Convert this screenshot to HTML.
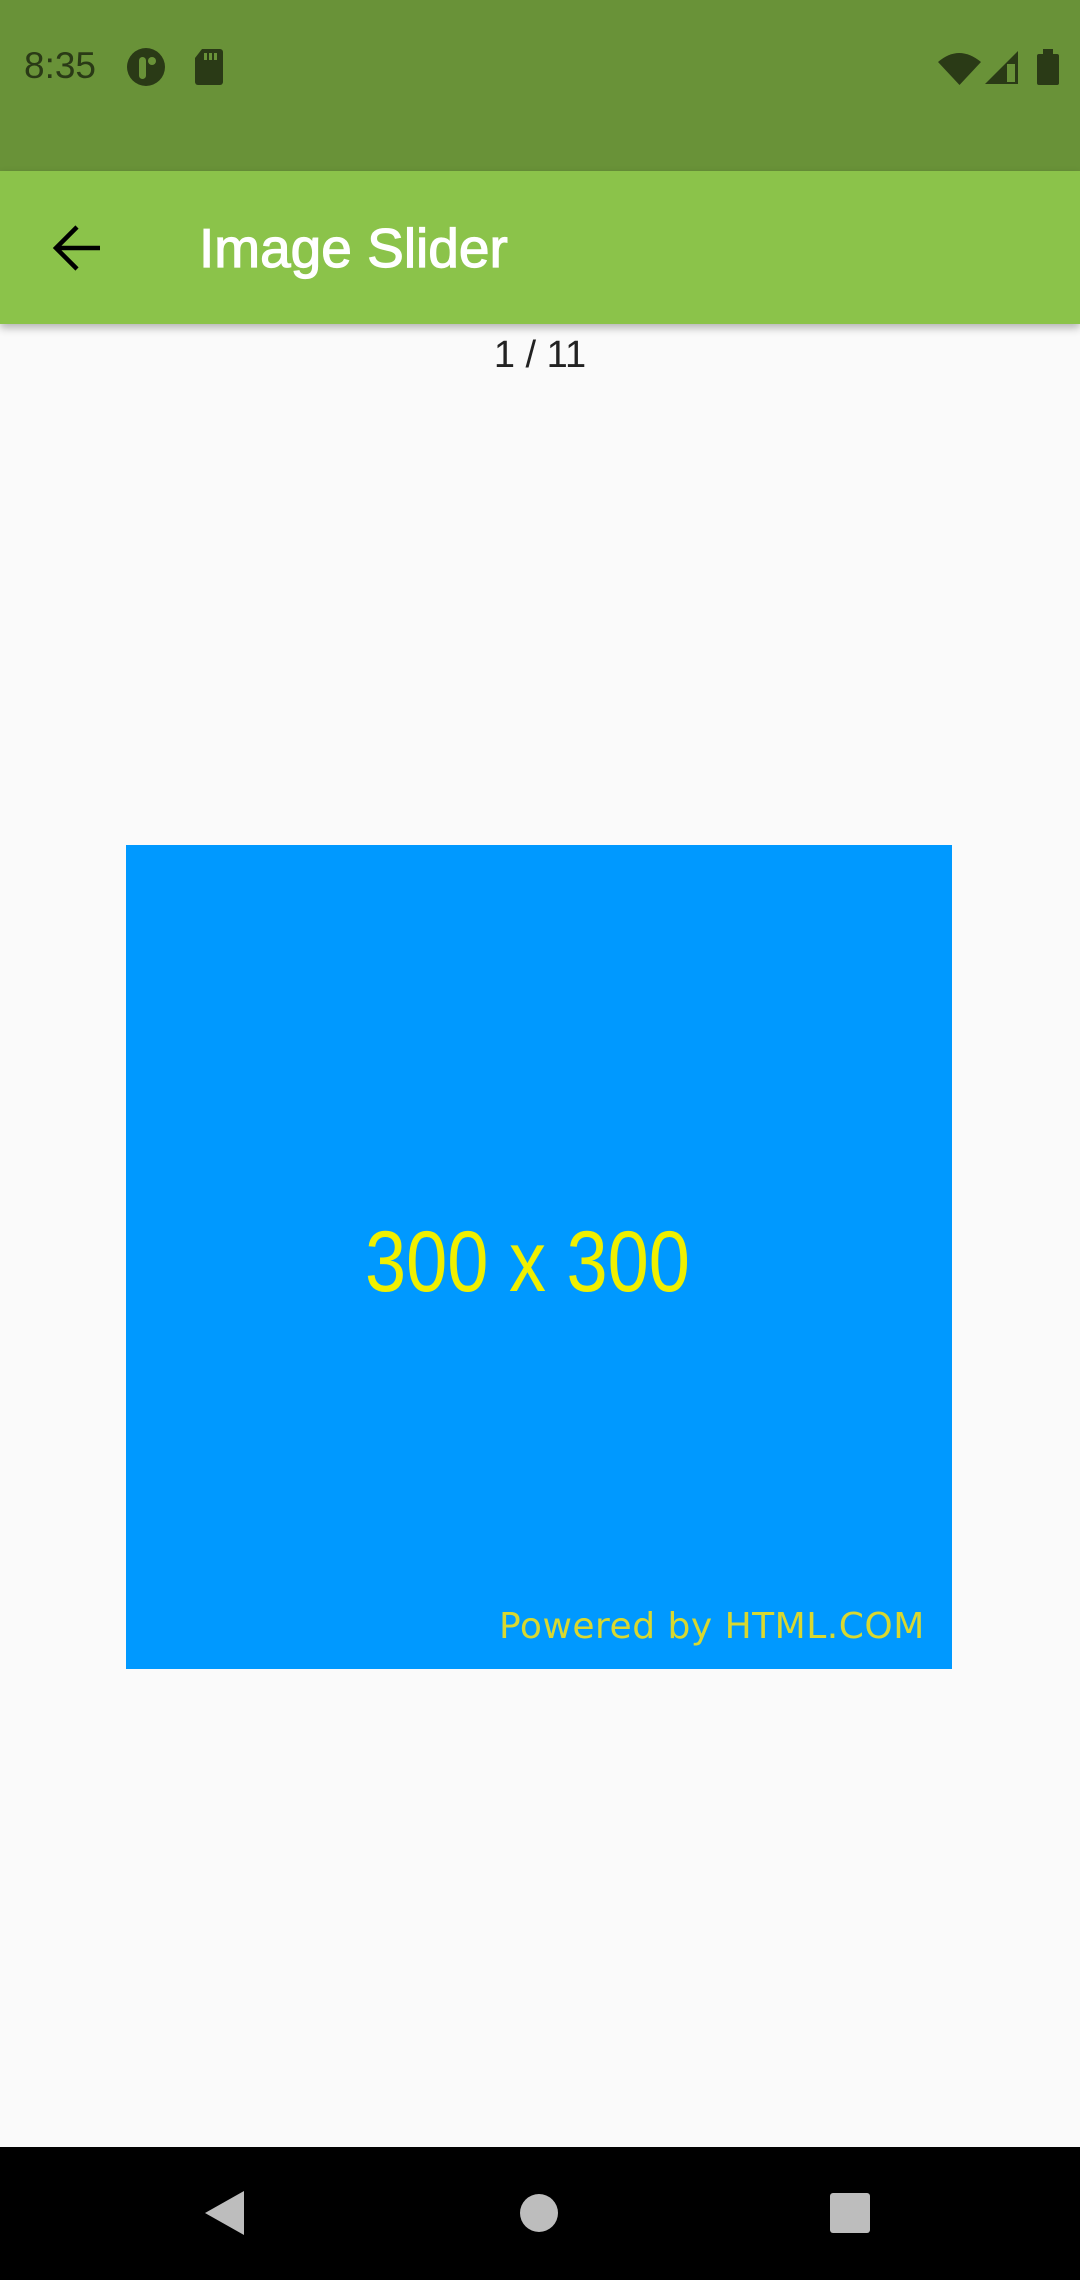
<!DOCTYPE html>
<html><head><meta charset="utf-8"><style>
html,body{margin:0;padding:0;width:1080px;height:2280px;overflow:hidden;background:#fafafa;font-family:"Liberation Sans",sans-serif;position:relative}
.abs{position:absolute}
</style></head><body>
<div class="abs" style="left:0;top:0;width:1080px;height:171px;background:#699238"></div>
<div class="abs" style="left:24px;top:45px;font-size:37px;color:#2a3a16;line-height:42px">8:35</div>
<svg class="abs" style="left:126px;top:46px" width="44" height="44" viewBox="0 0 44 44"><circle cx="20" cy="21" r="19" fill="#2a3a16"/><rect x="13" y="11" width="7" height="22" rx="3.5" fill="#699238"/><circle cx="26" cy="15" r="4" fill="#699238"/></svg>
<svg class="abs" style="left:194px;top:49px" width="30" height="36" viewBox="0 0 30 36"><path d="M8 0H26a3 3 0 0 1 3 3V33a3 3 0 0 1-3 3H4a3 3 0 0 1-3-3V9Z" fill="#2a3a16"/><rect x="10" y="4" width="3" height="7" fill="#699238"/><rect x="15" y="4" width="3" height="7" fill="#699238"/><rect x="20" y="4" width="3" height="7" fill="#699238"/></svg>
<svg class="abs" style="left:936px;top:48px" width="130" height="40" viewBox="0 0 130 40"><path d="M2 14Q23 -4 45 14L23.5 37Z" fill="#2a3a16"/><path d="M49 36L82 3V36Z" fill="#2a3a16"/><rect x="71" y="16" width="8" height="18" fill="#699238"/><rect x="101" y="6" width="22" height="31" rx="2" fill="#2a3a16"/><rect x="107" y="1" width="10" height="6" fill="#2a3a16"/></svg>

<div class="abs" style="left:0;top:171px;width:1080px;height:153px;background:#8bc34a;box-shadow:0 4px 8px rgba(0,0,0,0.28)"></div>
<svg class="abs" style="left:52px;top:225px" width="50" height="48" viewBox="0 0 50 48"><path d="M4 23H48M25 2L4 23L25 44" stroke="#000" stroke-width="4.5" fill="none"/></svg>
<div class="abs" style="left:199px;top:215px;font-size:55px;color:#fff;line-height:66px;-webkit-text-stroke:1.2px #fff">Image Slider</div>
<div class="abs" style="left:0;top:333px;width:1080px;text-align:center;font-size:38px;color:#222;line-height:44px">1 / 11</div>

<div class="abs" style="left:126px;top:845px;width:826px;height:824px;background:#0099ff"></div>
<div class="abs" style="left:365px;top:1212px;font-size:86px;color:#f0f000;line-height:100px;transform:scaleX(0.86);transform-origin:left;white-space:nowrap">300 x 300</div>
<div class="abs" style="left:499px;top:1605px;font-family:'DejaVu Sans',sans-serif;font-size:36px;color:#d8d830;line-height:44px;letter-spacing:0.5px;white-space:nowrap">Powered by HTML.COM</div>

<div class="abs" style="left:0;top:2147px;width:1080px;height:133px;background:#000"></div>
<svg class="abs" style="left:0;top:2147px" width="1080" height="133" viewBox="0 0 1080 133"><path d="M205 66L244 44V88Z" fill="#bdbdbd"/><circle cx="539" cy="66" r="19" fill="#bdbdbd"/><rect x="830" y="46" width="40" height="40" rx="3" fill="#bdbdbd"/></svg>
</body></html>
